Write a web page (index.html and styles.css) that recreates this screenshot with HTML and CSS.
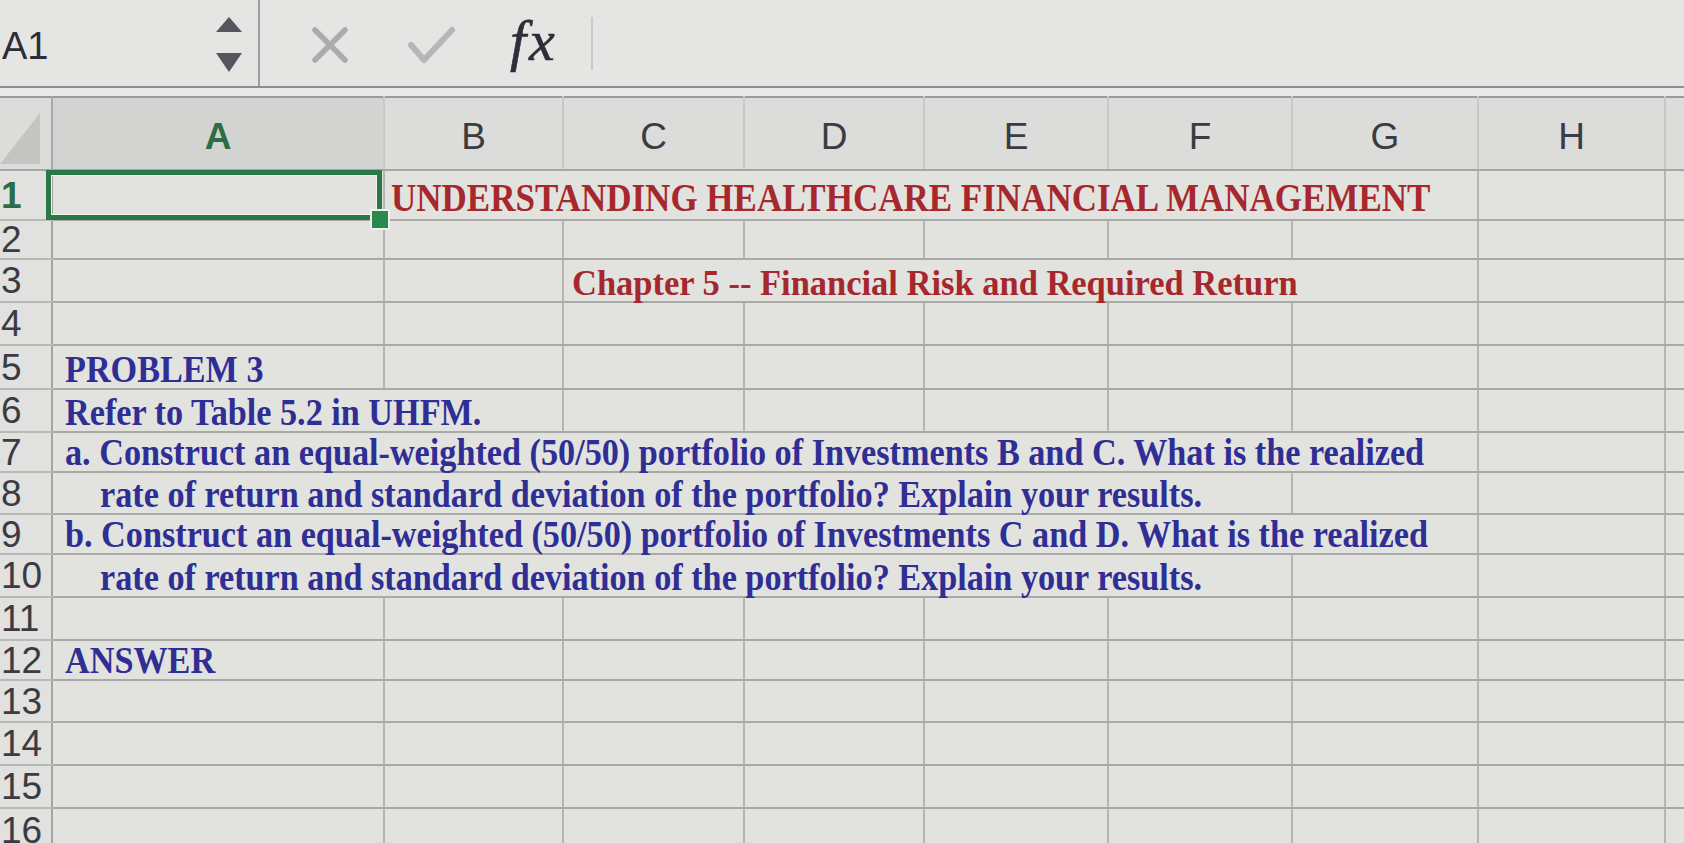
FILE: index.html
```html
<!DOCTYPE html>
<html lang="en">
<head>
<meta charset="utf-8">
<title>Sheet</title>
<link rel="stylesheet" href="styles.css">
</head>
<body>
<div class="fbar">
  <div class="namebox">
    <span class="name">A1</span>
    <svg class="spin" width="26" height="56" viewBox="0 0 26 56"><polygon points="13,0 26,15 0,15"/><polygon points="0,36 26,36 13,55"/></svg>
  </div>
  <svg class="icon-x" width="38" height="38" viewBox="0 0 38 38"><path d="M4 4 L34 34 M34 4 L4 34"/></svg>
  <svg class="icon-ok" width="48" height="38" viewBox="0 0 48 38"><path d="M4 19 L17 34 L45 4"/></svg>
  <div class="fx">fx</div>
  <div class="sep"></div>
</div>
<div class="band"></div>
<table class="sheet">
  <colgroup>
    <col class="w-rh"><col class="w-a"><col class="w-b"><col class="w-c"><col class="w-d"><col class="w-e"><col class="w-f"><col class="w-g"><col class="w-h"><col class="w-i">
  </colgroup>
  <thead>
    <tr class="hdr">
      <th class="corner"><svg width="40" height="51" viewBox="0 0 40 51"><polygon points="40,0 40,51 0,51"/></svg></th>
      <th class="ch ch-sel">A</th><th class="ch">B</th><th class="ch">C</th><th class="ch">D</th><th class="ch">E</th><th class="ch">F</th><th class="ch">G</th><th class="ch">H</th><th class="ch"></th>
    </tr>
  </thead>
  <tbody>
    <tr class="h50"><th class="rh rh-sel">1</th><td class="sel"></td><td colspan="6" class="red title"><span class="t t-title">UNDERSTANDING HEALTHCARE FINANCIAL MANAGEMENT</span></td><td></td><td></td></tr>
    <tr class="h39"><th class="rh">2</th><td></td><td></td><td></td><td></td><td></td><td></td><td></td><td></td><td></td></tr>
    <tr class="h43"><th class="rh">3</th><td></td><td></td><td colspan="5" class="red chap"><span class="t t-chap">Chapter 5 -- Financial Risk and Required Return</span></td><td></td><td></td></tr>
    <tr class="h43"><th class="rh">4</th><td></td><td></td><td></td><td></td><td></td><td></td><td></td><td></td><td></td></tr>
    <tr class="h44"><th class="rh">5</th><td class="blue"><span class="t">PROBLEM 3</span></td><td></td><td></td><td></td><td></td><td></td><td></td><td></td><td></td></tr>
    <tr class="h43"><th class="rh">6</th><td colspan="2" class="blue"><span class="t">Refer to Table 5.2 in UHFM.</span></td><td></td><td></td><td></td><td></td><td></td><td></td><td></td></tr>
    <tr class="h40"><th class="rh">7</th><td colspan="7" class="blue"><span class="t">a. Construct an equal-weighted (50/50) portfolio of Investments B and C. What is the realized</span></td><td></td><td></td></tr>
    <tr class="h42"><th class="rh">8</th><td colspan="6" class="blue ind"><span class="t">rate of return and standard deviation of the portfolio? Explain your results.</span></td><td></td><td></td><td></td></tr>
    <tr class="h40"><th class="rh">9</th><td colspan="7" class="blue"><span class="t">b. Construct an equal-weighted (50/50) portfolio of Investments C and D. What is the realized</span></td><td></td><td></td></tr>
    <tr class="h43"><th class="rh">10</th><td colspan="6" class="blue ind"><span class="t">rate of return and standard deviation of the portfolio? Explain your results.</span></td><td></td><td></td><td></td></tr>
    <tr class="h43"><th class="rh">11</th><td></td><td></td><td></td><td></td><td></td><td></td><td></td><td></td><td></td></tr>
    <tr class="h40"><th class="rh">12</th><td class="blue"><span class="t">ANSWER</span></td><td></td><td></td><td></td><td></td><td></td><td></td><td></td><td></td></tr>
    <tr class="h42"><th class="rh">13</th><td></td><td></td><td></td><td></td><td></td><td></td><td></td><td></td><td></td></tr>
    <tr class="h43"><th class="rh">14</th><td></td><td></td><td></td><td></td><td></td><td></td><td></td><td></td><td></td></tr>
    <tr class="h43"><th class="rh">15</th><td></td><td></td><td></td><td></td><td></td><td></td><td></td><td></td><td></td></tr>
    <tr class="h44"><th class="rh">16</th><td></td><td></td><td></td><td></td><td></td><td></td><td></td><td></td><td></td></tr>
  </tbody>
</table>
</body>
</html>
```
FILE: styles.css
```css
html, body {
  margin: 0;
  padding: 0;
}
body {
  width: 1684px;
  height: 843px;
  overflow: hidden;
  background: #e2e2df;
  font-family: "Liberation Sans", Arial, sans-serif;
}

/* formula bar */
.fbar {
  display: flex;
  align-items: center;
  height: 88px;
  box-sizing: border-box;
  background: #e5e5e3;
  border-bottom: 2px solid #8e8e8e;
}
.namebox {
  width: 260px;
  height: 100%;
  box-sizing: border-box;
  border-right: 2px solid #9e9e9e;
  display: flex;
  align-items: center;
  justify-content: space-between;
  padding: 0 16px 0 2px;
}
.name {
  font-size: 38px;
  line-height: 1;
  color: #2d2d35;
  margin-top: 6px;
}
.spin {
  fill: #55555d;
  margin-top: 4px;
}
.icon-x {
  margin-left: 51px;
  margin-top: 4px;
  fill: none;
  stroke: #ababab;
  stroke-width: 5.5;
  stroke-linecap: round;
}
.icon-ok {
  margin-left: 58px;
  margin-top: 4px;
  fill: none;
  stroke: #b6b6b6;
  stroke-width: 6;
  stroke-linecap: round;
  stroke-linejoin: round;
}
.fx {
  width: 81px;
  margin-left: 55px;
  box-sizing: border-box;
  font-family: "Liberation Serif", "Times New Roman", serif;
  font-style: italic;
  font-size: 58px;
  line-height: 1;
  letter-spacing: 3px;
  color: #2e2e3a;
  margin-top: -4px;
  -webkit-text-stroke: 0.6px #2e2e3a;
}
.sep {
  width: 2px;
  height: 53px;
  background: #cacaca;
}

.band {
  height: 8px;
  background: #e9e9e7;
}

/* sheet */
.sheet {
  border-collapse: collapse;
  table-layout: fixed;
  width: 1725px;
  border-top: 2px solid #9a9a9a;
}
.w-rh { width: 52px; }
.w-a { width: 332px; }
.w-b { width: 179px; }
.w-c { width: 181px; }
.w-d { width: 180px; }
.w-e { width: 184px; }
.w-f { width: 184px; }
.w-g { width: 186px; }
.w-h { width: 187px; }
.w-i { width: 60px; }

.hdr { height: 73px; }
.hdr th {
  background: #dcdcda;
  border-right: 2px solid #c8c8c6;
  border-bottom: 2px solid #a6a6a6;
  padding: 0;
}
.corner {
  vertical-align: bottom;
  text-align: left;
  line-height: 0;
  padding-bottom: 5px !important;
  border-right: 2px solid #a9a9a9 !important;
}
.corner svg { fill: #c4c4c3; }
.ch {
  font-size: 37px;
  font-weight: normal;
  color: #3b3b43;
  line-height: 1;
  text-align: center;
  vertical-align: middle;
  padding-top: 6px !important;
}
.ch-sel {
  background: #d3d3d1 !important;
  color: #2c6d45;
  font-weight: bold;
}

.h50 { height: 50px; }
.h39 { height: 39px; }
.h40 { height: 40px; }
.h42 { height: 42px; }
.h43 { height: 43px; }
.h44 { height: 44px; }

.rh {
  font-size: 37px;
  font-weight: normal;
  color: #3b3b43;
  text-align: left;
  vertical-align: middle;
  line-height: 1;
  padding: 0 0 0 1px;
  background: #e1e1df;
  border-right: 2px solid #a3a3a3;
  border-bottom: 2px solid #b9b9b7;
  white-space: nowrap;
}
.rh-sel {
  color: #2c6d45;
  font-weight: bold;
}

td {
  padding: 0 0 0 12px;
  border-right: 2px solid #b5b5b3;
  border-bottom: 2px solid #a9a9a7;
  white-space: nowrap;
  vertical-align: bottom;
  line-height: 1;
  font-family: "Liberation Serif", "Times New Roman", serif;
  font-weight: bold;
}

.sel { position: relative; }
.sel::after {
  content: "";
  position: absolute;
  left: -7px;
  top: -1px;
  right: 1px;
  bottom: -1px;
  border: 5px solid #2a7747;
  box-shadow: inset 0 0 0 1px #f3f3f1;
}
.sel::before {
  content: "";
  position: absolute;
  left: 317px;
  top: 38px;
  width: 16px;
  height: 17px;
  background: #2a8a4c;
  border: 2px solid #f0f0ee;
  z-index: 2;
}

.t {
  display: inline-block;
  transform-origin: left bottom;
}
.red { color: #a6282d; }
.blue { color: #2f2e94; font-size: 38px; }
.blue .t { transform: scaleX(0.9); }
.title { font-size: 40px; padding-left: 6px; padding-bottom: 1px; }
.t-title { transform: scaleX(0.875); }
.chap { font-size: 35px; padding-left: 8px; padding-bottom: 0; }
.t-chap { transform: scaleX(0.985); }
.ind { padding-left: 47px; }
```
